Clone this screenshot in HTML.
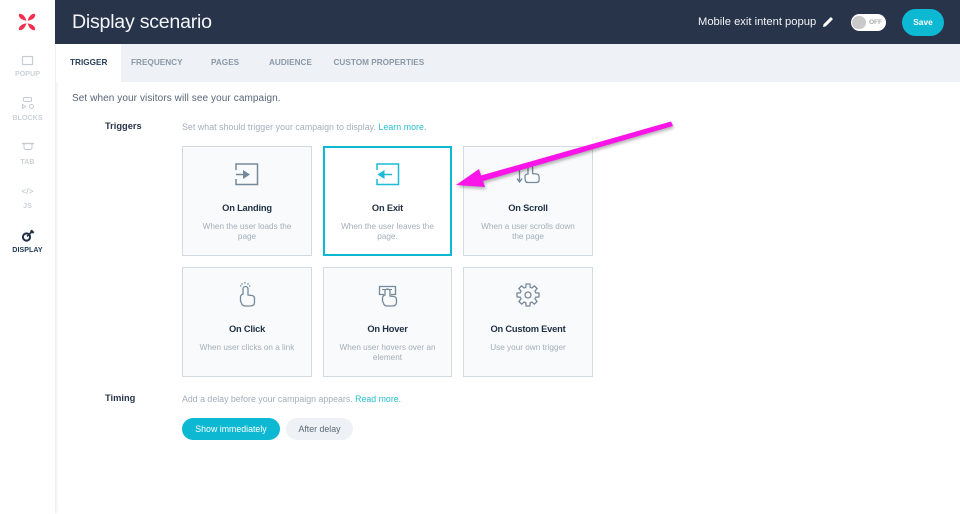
<!DOCTYPE html>
<html><head><meta charset="utf-8"><style>
html,body{margin:0;padding:0;width:960px;height:514px;overflow:hidden;background:#fff;font-family:"Liberation Sans",sans-serif}
.a{position:absolute;white-space:nowrap}
#side{left:0;top:0;width:55px;height:514px;background:#fff;box-shadow:1px 0 3px rgba(40,52,74,.12)}
#head{left:55px;top:0;width:905px;height:44px;background:#28344a}
#tabs{left:56px;top:44px;width:904px;height:38px;background:#eef2f6}
#act{left:56px;top:44px;width:65px;height:38px;background:#fff}
.t{font-size:8.2px;font-weight:bold;color:#8b98a7;top:58px;letter-spacing:.02px}
.s{font-size:7.1px;font-weight:bold;color:#ccd2d9;width:55px;left:0;text-align:center;letter-spacing:.05px}
.c{position:absolute;box-sizing:border-box;width:130px;height:110px;background:#f8fafb;border:1px solid #d3dbe2;text-align:center}
.c b{position:absolute;left:0;right:0;top:56px;font-size:9.3px;letter-spacing:-.2px;color:#1f3044}
.c p{position:absolute;left:14px;right:14px;top:75px;margin:0;font-size:8.2px;line-height:10px;color:#a4aeb9}
.c svg{position:absolute;left:0;top:0}
.h{font-size:9.3px;font-weight:bold;color:#28344a}
.g{font-size:8.8px;color:#a4aeb9;letter-spacing:.05px}
.g span{color:#27bdd0}
</style></head><body>
<div class="a" id="side"></div>
<svg class="a" style="left:18px;top:13px" width="19" height="19" viewBox="0 0 19 19"><g fill="#f0304e"><path d="M1.500 .8Q6.500 1 8.400 7.800Q1.500 6.500 .8 2.500Q.8 1 1.500 .8Z"/><path transform="matrix(-1 0 0 1 18 0)" d="M1.500 .8Q6.500 1 8.400 7.800Q1.500 6.500 .8 2.500Q.8 1 1.500 .8Z"/><path transform="matrix(1 0 0 -1 0 18)" d="M1.500 .8Q6.500 1 8.400 7.800Q1.500 6.500 .8 2.500Q.8 1 1.500 .8Z"/><path transform="matrix(-1 0 0 -1 18 18)" d="M1.500 .8Q6.500 1 8.400 7.800Q1.500 6.500 .8 2.500Q.8 1 1.500 .8Z"/></g></svg>
<svg class="a" style="left:20px;top:54px" width="16" height="14"><rect x="2.500" y="2.500" width="10" height="8" fill="none" stroke="#c4ccd4" stroke-width="1.200"/></svg>
<div class="a s" style="top:70px">POPUP</div>
<svg class="a" style="left:20px;top:95px" width="16" height="16" fill="none" stroke="#c4ccd4"><rect x="3.500" y="2.500" width="8" height="4" rx="1"/><path d="M2.500 9.500v4l3-2z"/><circle cx="11.500" cy="11.500" r="2"/></svg>
<div class="a s" style="top:114px">BLOCKS</div>
<svg class="a" style="left:20px;top:140px" width="16" height="14" fill="none" stroke="#c4ccd4"><path d="M2 3.500h12" stroke-width="1.500"/><path d="M4 4v3.500q0 2 2 2h4q2 0 2-2V4"/></svg>
<div class="a s" style="top:158px">TAB</div>
<div class="a" style="left:0;width:55px;top:186px;text-align:center;font-size:8.500px;line-height:10px;color:#b5bec8">&lt;/&gt;</div>
<div class="a s" style="top:202px">JS</div>
<svg class="a" style="left:20px;top:228px" width="16" height="15"><circle cx="6.500" cy="9" r="3.600" fill="none" stroke="#1f3044" stroke-width="2"/><path d="M7 8.500L11.500 4" stroke="#1f3044" stroke-width="1.600"/><path d="M10 3l2-1.500 1 1.500 1.500 1-1.500 1.500-2-.5z" fill="#1f3044"/></svg>
<div class="a s" style="top:246px;color:#1f3a57">DISPLAY</div>

<div class="a" id="head"></div>
<div class="a" style="left:72px;top:10px;font-size:19.600px;line-height:25px;color:#f3f5f8;letter-spacing:-.25px">Display scenario</div>
<div class="a" style="left:698px;top:15px;font-size:11.200px;line-height:14px;color:#f3f5f8">Mobile exit intent popup</div>
<svg class="a" style="left:822px;top:16px" width="12" height="12"><path d="M1 11l.6-2.800L8.200 1.600a1 1 0 0 1 1.400 0l.8.8a1 1 0 0 1 0 1.400L3.800 10.400z" fill="#fff"/></svg>
<div class="a" style="left:851px;top:14px;width:35px;height:17px;border-radius:9px;background:#fff"></div>
<div class="a" style="left:852px;top:15.500px;width:13.500px;height:13.500px;border-radius:50%;background:#c9c9c9"></div>
<div class="a" style="left:869px;top:18px;font-size:6.500px;line-height:9px;font-weight:bold;color:#a5a8ac">OFF</div>
<div class="a" style="left:902px;top:9px;width:42px;height:27px;border-radius:14px;background:#0db8d3;color:#fff;font-size:8.400px;font-weight:bold;line-height:27px;text-align:center">Save</div>

<div class="a" id="tabs"></div><div class="a" id="act"></div>
<div class="a t" style="left:70px;color:#28405a">TRIGGER</div>
<div class="a t" style="left:131px">FREQUENCY</div>
<div class="a t" style="left:211px">PAGES</div>
<div class="a t" style="left:269px">AUDIENCE</div>
<div class="a t" style="left:333.500px">CUSTOM PROPERTIES</div>

<div class="a" style="left:72px;top:93px;font-size:10px;line-height:12px;color:#566577;letter-spacing:.09px">Set when your visitors will see your campaign.</div>
<div class="a h" style="left:105px;top:119.500px;line-height:12px">Triggers</div>
<div class="a g" style="left:182px;top:121px;line-height:12px">Set what should trigger your campaign to display. <span>Learn more.</span></div>

<div class="c" style="left:182px;top:146px"><svg width="130" height="60" fill="none" stroke="#76899a" stroke-width="1.500"><path d="M53 23V17h21.500v20.500H53V32"/><path d="M53 27.500h9"/><path d="M60 23v9l7-4.500z" fill="#76899a" stroke="none"/></svg><b>On Landing</b><p>When the user loads the page</p></div>
<div class="c" style="left:323px;top:146px;width:129px;background:#fff;border:2px solid #0db8d3"><svg width="130" height="60" fill="none" stroke="#1cbcd6" stroke-width="1.500" style="left:-1px;top:-1px"><path d="M53 23V17h21.500v20.500H53V32"/><path d="M59 27.500h9"/><path d="M60.500 23v9l-7-4.500z" fill="#1cbcd6" stroke="none"/></svg><b style="top:55px">On Exit</b><p style="top:74px">When the user leaves the page.</p></div>
<div class="c" style="left:463px;top:146px"><svg width="130" height="60" fill="none" stroke="#76899a" stroke-width="1.300"><path d="M55.500 20v14"/><path d="M53 31.500l2.500 3.500 2.500-3.500"/><path d="M64 27V21a2.300 2.300 0 0 1 4.600 0V26.500l4 .5q2.500 .4 2.500 3V33q0 2.500-3 2.500H64q-2 0-2.500-1.500L61 31V29q0-1.700 3-2z"/></svg><b>On Scroll</b><p>When a user scrolls down the page</p></div>

<div class="c" style="left:182px;top:267px"><svg width="130" height="60" fill="none" stroke="#76899a" stroke-width="1.300"><path d="M60 26V21a2.500 2.500 0 0 1 5 0V27l4 .5q2.500 .5 2.500 3V34q0 4-4 4H62q-2 0-3-1.500L57.500 33V29q0-2 2.500-3z"/><path d="M58.500 15.500l1 1M65.500 15.500l-1 1M62 14v1.500M57 18h1.300M66 18h1.300"/></svg><b>On Click</b><p>When user clicks on a link</p></div>
<div class="c" style="left:323px;top:267px;width:129px"><svg width="130" height="60" fill="none" stroke="#76899a" stroke-width="1.300"><path d="M60 26.500h-4.500V18.500h16V26.500H67"/><path d="M58 21.500h10" stroke-width="1"/><path d="M61 27V23.500a2.500 2.500 0 0 1 5 0V28l3.500.5q3 .5 3 3V34q0 4-4 4H63q-2 0-3-1.500L58.500 33V30q0-2 2.500-3z"/></svg><b>On Hover</b><p>When user hovers over an element</p></div>
<div class="c" style="left:463px;top:267px"><svg width="130" height="60" fill="none" stroke="#76899a" stroke-width="1.300"><circle cx="64" cy="27" r="3"/><g transform="translate(64 27)"><path d="M-3.100-7.400L-2.200-7.700-1.900-11H1.900L2.200-7.700 3.100-7.400"/><path transform="rotate(45)" d="M-3.100-7.400L-2.200-7.700-1.900-11H1.900L2.200-7.700 3.100-7.400"/><path transform="rotate(90)" d="M-3.100-7.400L-2.200-7.700-1.900-11H1.900L2.200-7.700 3.100-7.400"/><path transform="rotate(135)" d="M-3.100-7.400L-2.200-7.700-1.900-11H1.900L2.200-7.700 3.100-7.400"/><path transform="rotate(180)" d="M-3.100-7.400L-2.200-7.700-1.900-11H1.900L2.200-7.700 3.100-7.400"/><path transform="rotate(225)" d="M-3.100-7.400L-2.200-7.700-1.900-11H1.900L2.200-7.700 3.100-7.400"/><path transform="rotate(270)" d="M-3.100-7.400L-2.200-7.700-1.900-11H1.900L2.200-7.700 3.100-7.400"/><path transform="rotate(315)" d="M-3.100-7.400L-2.200-7.700-1.900-11H1.900L2.200-7.700 3.100-7.400"/></g></svg><b>On Custom Event</b><p>Use your own trigger</p></div>

<div class="a h" style="left:105px;top:391.500px;line-height:12px">Timing</div>
<div class="a g" style="left:182px;top:393px;line-height:12px;letter-spacing:0">Add a delay before your campaign appears. <span>Read more.</span></div>
<div class="a" style="left:182px;top:418px;width:98px;height:22px;border-radius:11px;background:#0db8d3;color:#fff;font-size:8.800px;line-height:22px;text-align:center">Show immediately</div>
<div class="a" style="left:286px;top:418px;width:67px;height:22px;border-radius:11px;background:#eef1f5;color:#5d6b7a;font-size:8.800px;line-height:22px;text-align:center">After delay</div>

<svg class="a" style="left:0;top:0;pointer-events:none" width="960" height="514"><defs><filter id="b" x="-10%" y="-30%" width="120%" height="160%"><feGaussianBlur stdDeviation="1.500"/></filter></defs>
<path d="M671 121.500L481 175.500L479 169L456 185L485 187L483 181L673 126Z" fill="#000" opacity=".3" filter="url(#b)" transform="translate(1 2)"/>
<path d="M671 121.500L481 175.500L479 169L456 185L485 187L483 181L673 126Z" fill="#fb14e8"/></svg>
</body></html>
